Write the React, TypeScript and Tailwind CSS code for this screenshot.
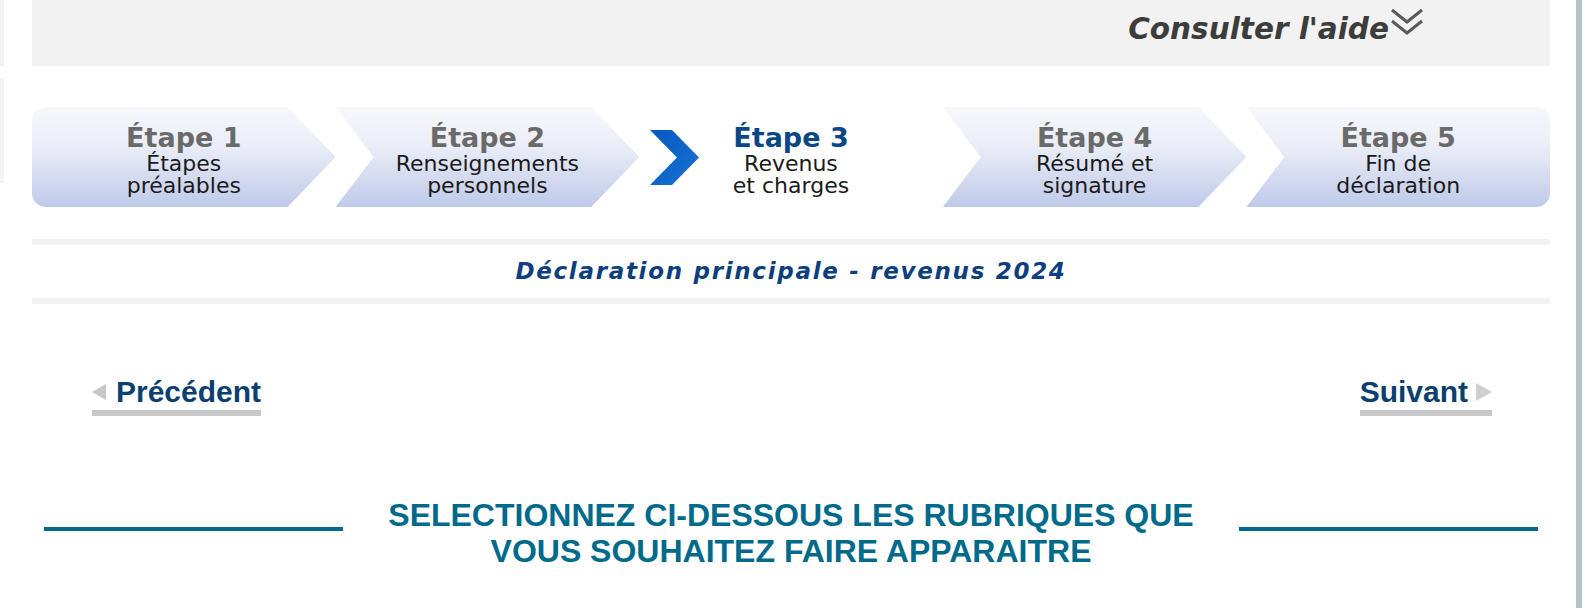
import React from 'react';

interface Step {
  n: number;
  lines: string[];
  shape: string;
  active?: boolean;
}

const steps: Step[] = [
  {
    n: 1,
    lines: ['Étapes', 'préalables'],
    shape:
      'rounded-l-[14px] [clip-path:polygon(0_0,calc(100%_-_48px)_0,100%_50%,calc(100%_-_48px)_100%,0_100%)]',
  },
  {
    n: 2,
    lines: ['Renseignements', 'personnels'],
    shape:
      '[clip-path:polygon(0_0,calc(100%_-_48px)_0,100%_50%,calc(100%_-_48px)_100%,0_100%,38px_50%)]',
  },
  { n: 3, lines: ['Revenus', 'et charges'], shape: '', active: true },
  {
    n: 4,
    lines: ['Résumé et', 'signature'],
    shape:
      '[clip-path:polygon(0_0,calc(100%_-_48px)_0,100%_50%,calc(100%_-_48px)_100%,0_100%,38px_50%)]',
  },
  {
    n: 5,
    lines: ['Fin de', 'déclaration'],
    shape: 'rounded-r-[14px] [clip-path:polygon(0_0,100%_0,100%_100%,0_100%,38px_50%)]',
  },
];

function DoubleChevron() {
  return (
    <svg width="36" height="32" viewBox="0 0 36 32" fill="none">
      <path d="M3 3 L18 15 L33 3" stroke="#5a5a5a" strokeWidth="3" />
      <path d="M3 14 L18 26 L33 14" stroke="#5a5a5a" strokeWidth="3" />
    </svg>
  );
}

function ActiveChevron() {
  return (
    <svg width="49" height="55" viewBox="0 0 49 55">
      <defs>
        <linearGradient id="chev" x1="0" y1="0" x2="1" y2="1">
          <stop offset="0" stopColor="#0a58bd" />
          <stop offset="1" stopColor="#1473d6" />
        </linearGradient>
      </defs>
      <polygon points="0,0 22,0 49,27.5 22,55 0,55 27,27.5" fill="url(#chev)" />
    </svg>
  );
}

function StepBox({ step }: { step: Step }) {
  return (
    <div
      className={`relative flex-1 h-full flex flex-col items-center pt-[16px] ${
        step.active ? 'bg-white' : `bg-linear-to-b from-[#f7f8fc] via-[#eaedf7] via-40% to-[#bfc9e9] ${step.shape}`
      }`}
      style={{ fontFamily: '"DejaVu Sans", Verdana, sans-serif' }}
    >
      {step.active && (
        <div className="absolute left-[11px] top-[23px]">
          <ActiveChevron />
        </div>
      )}
      <div
        className={`text-[27px] leading-[29px] font-bold ${
          step.active ? 'text-[#0b4787]' : 'text-[#6a6a6a]'
        }`}
      >
        Étape {step.n}
      </div>
      <div className="mt-[1px] text-[22px] leading-[22px] text-center text-[#1a1a1a]">
        {step.lines.map((l) => (
          <div key={l}>{l}</div>
        ))}
      </div>
    </div>
  );
}

export default function App() {
  return (
    <div className="flex h-[608px] w-full overflow-hidden bg-white">
      <div className="w-[4px] shrink-0 flex flex-col">
        <div className="h-[66px] bg-[#f2f2f2]" />
        <div className="h-[12px]" />
        <div className="h-[105px] bg-[#f3f3f3]" />
      </div>

      <div className="ml-[28px] w-[1518px] shrink-0 flex flex-col">
        <div className="h-[66px] bg-[#f2f2f2] flex justify-end items-start pr-[125px]">
          <span
            className="pt-[13px] text-[29.5px] leading-[32px] font-bold italic text-[#3c3c3c]"
            style={{ fontFamily: '"DejaVu Sans", Verdana, sans-serif' }}
          >
            Consulter l'aide
          </span>
          <div className="mt-[7px]">
            <DoubleChevron />
          </div>
        </div>

        <div className="mt-[41px] h-[100px] flex">
          {steps.map((s) => (
            <StepBox key={s.n} step={s} />
          ))}
        </div>

        <div className="mt-[32px] h-[6px] bg-[#f2f2f2]" />
        <div className="h-[53px] flex items-center justify-center">
          <span
            className="text-[23px] font-bold italic tracking-[1.7px] text-[#0d3f7e]"
            style={{ fontFamily: '"DejaVu Sans", Verdana, sans-serif' }}
          >
            Déclaration principale - revenus 2024
          </span>
        </div>
        <div className="h-[6px] bg-[#f2f2f2]" />

        <div
          className="mt-[71px] flex justify-between pl-[60px] pr-[58px]"
          style={{ fontFamily: '"Liberation Sans", Arial, sans-serif' }}
        >
          <a className="flex items-center gap-[10px] pb-[2px] border-b-[6px] border-[#c8c8c8] text-[30px] leading-[33px] font-bold text-[#0a3f6f]">
            <svg width="14" height="16" viewBox="0 0 14 16">
              <polygon points="14,0 14,16 0,8" fill="#c9c9c9" />
            </svg>
            Précédent
          </a>
          <a className="flex items-center gap-[8px] pb-[2px] border-b-[6px] border-[#c8c8c8] text-[30px] leading-[33px] font-bold text-[#0a3f6f]">
            Suivant
            <svg width="16" height="18" viewBox="0 0 16 18">
              <polygon points="0,0 16,9 0,18" fill="#cfcfcf" />
            </svg>
          </a>
        </div>

        <div
          className="mt-[81px] flex items-start px-[12px]"
          style={{ fontFamily: '"Liberation Sans", Arial, sans-serif' }}
        >
          <div className="w-[299px] h-[4px] mt-[30px] bg-[#006a8b]" />
          <h2 className="flex-1 text-center text-[32px] leading-[36px] font-bold text-[#006a8b]">
            SELECTIONNEZ CI-DESSOUS LES RUBRIQUES QUE
            <br />
            VOUS SOUHAITEZ FAIRE APPARAITRE
          </h2>
          <div className="w-[299px] h-[4px] mt-[30px] bg-[#006a8b]" />
        </div>
      </div>

      <div className="flex-1" />
      <div className="w-[6px] shrink-0 bg-[#b3c3c9]" />
    </div>
  );
}
